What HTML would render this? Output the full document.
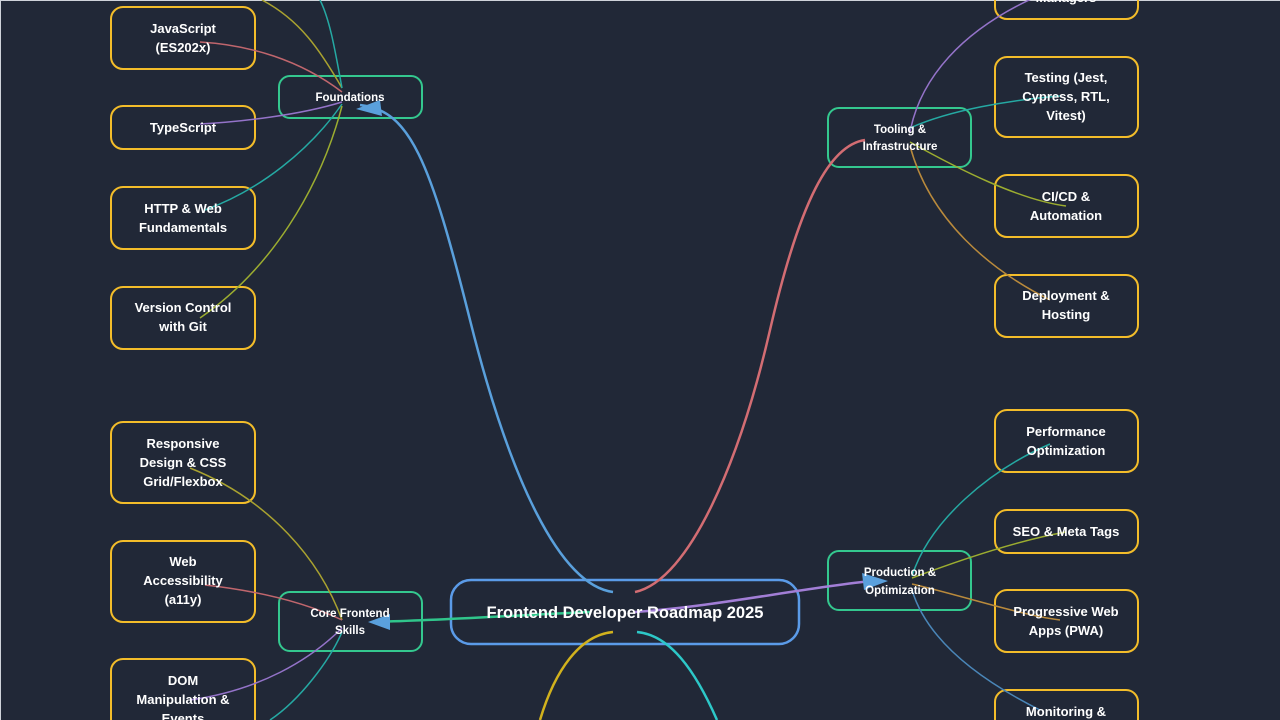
<!DOCTYPE html>
<html><head><meta charset="utf-8"><style>
html,body{margin:0;padding:0;background:#212837;width:1280px;height:720px;overflow:hidden}
svg{display:block;position:absolute;left:0;top:0}
text{font-family:"Liberation Sans",sans-serif;font-weight:bold;fill:#fff;text-anchor:middle}
.leaf{fill:none;stroke:#f3bd2a;stroke-width:2}
.mid{fill:none;stroke:#34c88f;stroke-width:2}
.l{fill:none;stroke-width:1.5}
</style></head><body>
<svg width="1280" height="720" viewBox="0 0 1280 720">
<rect x="0.5" y="0.5" width="1290" height="730" fill="none" stroke="#cfd3da" stroke-width="1"/>
<!-- boxes -->
<g class="leaf">
<rect x="111" y="7" width="144" height="62" rx="12"/>
<rect x="111" y="106" width="144" height="43" rx="12"/>
<rect x="111" y="187" width="144" height="62" rx="12"/>
<rect x="111" y="287" width="144" height="62" rx="12"/>
<rect x="111" y="422" width="144" height="81" rx="12"/>
<rect x="111" y="541" width="144" height="81" rx="12"/>
<rect x="111" y="659" width="144" height="90" rx="12"/>
<rect x="995" y="-40" width="143" height="59" rx="12"/>
<rect x="995" y="57" width="143" height="80" rx="12"/>
<rect x="995" y="175" width="143" height="62" rx="12"/>
<rect x="995" y="275" width="143" height="62" rx="12"/>
<rect x="995" y="410" width="143" height="62" rx="12"/>
<rect x="995" y="510" width="143" height="43" rx="12"/>
<rect x="995" y="590" width="143" height="62" rx="12"/>
<rect x="995" y="690" width="143" height="62" rx="12"/>
</g>
<g class="mid">
<rect x="279" y="76" width="143" height="42" rx="11"/>
<rect x="279" y="592" width="143" height="59" rx="11"/>
<rect x="828" y="108" width="143" height="59" rx="11"/>
<rect x="828" y="551" width="143" height="59" rx="11"/>
</g>
<rect x="451" y="580" width="348" height="64" rx="20" fill="none" stroke="#5b9be8" stroke-width="2.5"/>
<!-- main lines -->
<g fill="none" stroke-width="2.5">
<path d="M613 592 C560 585 510 480 470 320 C430 160 410 110 360 105" stroke="#5aa0dc"/>
<path d="M635 592 C690 580 740 460 770 330 C800 200 830 145 865 140" stroke="#d36d73"/>
<path d="M635 612 C720 606 800 588 880 580" stroke="#a27ed6"/>
<path d="M590 612 C520 615 450 620 372 622" stroke="#30c58b"/>
<path d="M613 632 C580 635 555 670 540 720" stroke="#d2b21d"/>
<path d="M637 632 C670 635 695 670 717 720" stroke="#2dc8c8"/>
</g>
<polygon points="356,109 380,100 382,116" fill="#5aa0dc"/>
<polygon points="888,581 862,573 864,590" fill="#5aa0dc"/>
<polygon points="368,622 390,614 390,630" fill="#5aa0dc"/>
<!-- branches -->
<g class="l">
<path d="M342 92 C300 60 250 45 200 42" stroke="#c0666d"/>
<path d="M342 102 C300 115 240 122 200 124" stroke="#9473c9"/>
<path d="M342 104 C310 150 260 190 205 210" stroke="#25a9a3"/>
<path d="M342 106 C320 190 270 270 200 318" stroke="#9cad30"/>
<path d="M342 88 C320 50 300 20 262 0" stroke="#a9a230"/>
<path d="M342 88 C335 50 330 20 320 0" stroke="#25a9a3"/>
<path d="M910 132 C920 80 960 30 1040 -5" stroke="#9473c9"/>
<path d="M910 128 C950 110 1010 100 1060 96" stroke="#25a9a3"/>
<path d="M910 142 C960 170 1020 200 1066 206" stroke="#9cad30"/>
<path d="M910 146 C930 220 990 270 1050 300" stroke="#b98a3c"/>
<path d="M912 576 C930 520 990 470 1050 444" stroke="#25a9a3"/>
<path d="M912 578 C960 560 1020 540 1066 532" stroke="#9cad30"/>
<path d="M912 584 C960 595 1020 615 1060 620" stroke="#b98a3c"/>
<path d="M912 590 C930 650 1000 690 1040 710" stroke="#4a86b8"/>
<path d="M342 620 C320 560 270 500 190 468" stroke="#a9a230"/>
<path d="M342 620 C300 600 250 590 205 585" stroke="#c0666d"/>
<path d="M342 628 C310 660 260 690 190 700" stroke="#9473c9"/>
<path d="M342 632 C330 660 300 700 270 720" stroke="#25a9a3"/>
</g>
<!-- text -->
<g font-size="13">
<text x="183" y="33">JavaScript</text><text x="183" y="52">(ES202x)</text>
<text x="183" y="132">TypeScript</text>
<text x="183" y="213">HTTP &amp; Web</text><text x="183" y="232">Fundamentals</text>
<text x="183" y="312">Version Control</text><text x="183" y="331">with Git</text>
<text x="183" y="448">Responsive</text><text x="183" y="467">Design &amp; CSS</text><text x="183" y="486">Grid/Flexbox</text>
<text x="183" y="566">Web</text><text x="183" y="585">Accessibility</text><text x="183" y="604">(a11y)</text>
<text x="183" y="685">DOM</text><text x="183" y="704">Manipulation &amp;</text><text x="183" y="723">Events</text>
<text x="1066" y="2">Managers</text>
<text x="1066" y="82">Testing (Jest,</text><text x="1066" y="101">Cypress, RTL,</text><text x="1066" y="120">Vitest)</text>
<text x="1066" y="201">CI/CD &amp;</text><text x="1066" y="220">Automation</text>
<text x="1066" y="300">Deployment &amp;</text><text x="1066" y="319">Hosting</text>
<text x="1066" y="436">Performance</text><text x="1066" y="455">Optimization</text>
<text x="1066" y="536">SEO &amp; Meta Tags</text>
<text x="1066" y="616">Progressive Web</text><text x="1066" y="635">Apps (PWA)</text>
<text x="1066" y="716">Monitoring &amp;</text>
</g>
<g font-size="11.5">
<text x="350" y="101">Foundations</text>
<text x="350" y="617">Core Frontend</text><text x="350" y="634">Skills</text>
<text x="900" y="133">Tooling &amp;</text><text x="900" y="150">Infrastructure</text>
<text x="900" y="576">Production &amp;</text><text x="900" y="594">Optimization</text>
</g>
<text x="625" y="618" font-size="16.5">Frontend Developer Roadmap 2025</text>
</svg>
</body></html>
